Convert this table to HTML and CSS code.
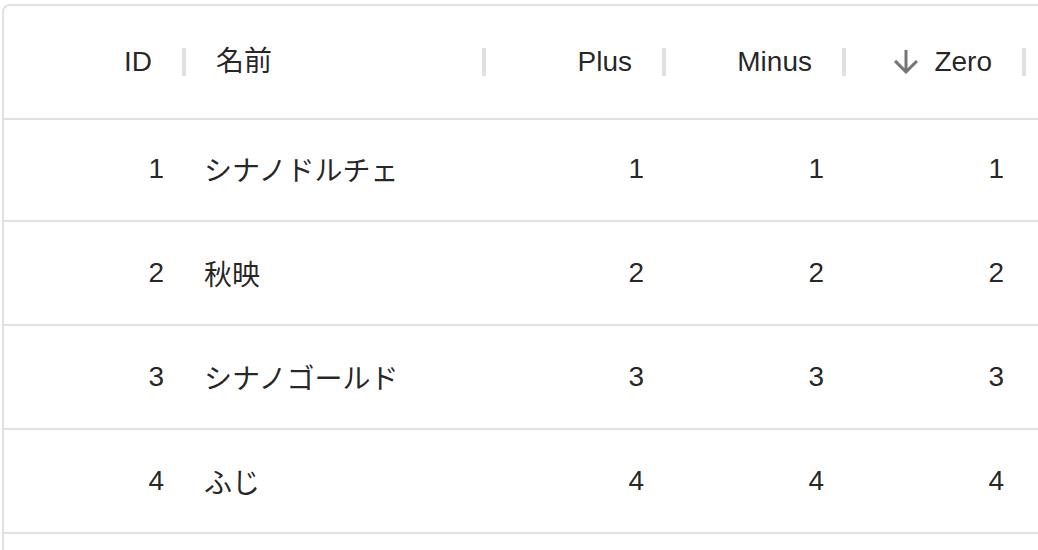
FILE: index.html
```html
<!DOCTYPE html>
<html lang="ja">
<head>
<meta charset="utf-8">
<title>Data grid</title>
<link rel="stylesheet" href="styles.css">
</head>
<body>
<div class="grid">
  <div class="header">
    <div class="hcell right"><span class="title">ID</span><span class="sep"></span></div>
    <div class="hcell left"><span class="title">名前</span><span class="sep"></span></div>
    <div class="hcell right"><span class="title">Plus</span><span class="sep"></span></div>
    <div class="hcell right"><span class="title">Minus</span><span class="sep"></span></div>
    <div class="hcell right sorted">
      <svg class="sort-icon" viewBox="0 0 24 24" aria-hidden="true"><path d="M20 12l-1.41-1.41L13 16.17V4h-2v12.17l-5.58-5.59L4 12l8 8 8-8z"/></svg>
      <span class="title">Zero</span><span class="sep"></span>
    </div>
    <div class="hcell filler"></div>
  </div>
  <div class="body">
    <div class="row">
      <div class="cell num">1</div><div class="cell text">シナノドルチェ</div><div class="cell num">1</div><div class="cell num">1</div><div class="cell num">1</div><div class="cell"></div>
    </div>
    <div class="row">
      <div class="cell num">2</div><div class="cell text">秋映</div><div class="cell num">2</div><div class="cell num">2</div><div class="cell num">2</div><div class="cell"></div>
    </div>
    <div class="row">
      <div class="cell num">3</div><div class="cell text">シナノゴールド</div><div class="cell num">3</div><div class="cell num">3</div><div class="cell num">3</div><div class="cell"></div>
    </div>
    <div class="row">
      <div class="cell num">4</div><div class="cell text">ふじ</div><div class="cell num">4</div><div class="cell num">4</div><div class="cell num">4</div><div class="cell"></div>
    </div>
  </div>
</div>
</body>
</html>
```

FILE: styles.css
```css
html, body {
  margin: 0;
  padding: 0;
  background: #ffffff;
  overflow: hidden;
}

body {
  font-family: "Liberation Sans", Arial, "Noto Sans CJK JP", sans-serif;
  font-size: 28px;
  color: rgba(0, 0, 0, 0.87);
  width: 1038px;
  height: 550px;
}

.grid {
  margin: 4px 0 0 2px;
  width: 1036px;
  height: 546px;
  border-top: 2px solid #e0e0e0;
  border-left: 2px solid #e0e0e0;
  border-top-left-radius: 8px;
  box-sizing: border-box;
  overflow: hidden;
}

.header,
.row {
  display: grid;
  grid-template-columns: 180px 300px 180px 180px 180px 1fr;
  box-sizing: border-box;
  border-bottom: 2px solid #e0e0e0;
}

.header {
  height: 114px;
}

.body {
  margin-top: -2px;
}

.row {
  height: 104px;
}

.hcell {
  position: relative;
  display: flex;
  align-items: center;
  padding: 0 32px;
  white-space: nowrap;
}

.hcell.right {
  justify-content: flex-end;
}

.hcell.left {
  justify-content: flex-start;
}

.title {
  line-height: 1;
}

.sep {
  position: absolute;
  right: -2px;
  top: 50%;
  width: 4px;
  height: 28px;
  margin-top: -14px;
  background: #e0e0e0;
  z-index: 1;
}

.sort-icon {
  width: 36px;
  height: 36px;
  fill: rgba(0, 0, 0, 0.54);
  margin-right: 10px;
  flex: none;
}

.cell {
  display: flex;
  align-items: center;
  padding: 0 20px;
  white-space: nowrap;
}

.cell.num {
  justify-content: flex-end;
}

.cell.text {
  justify-content: flex-start;
}
```
